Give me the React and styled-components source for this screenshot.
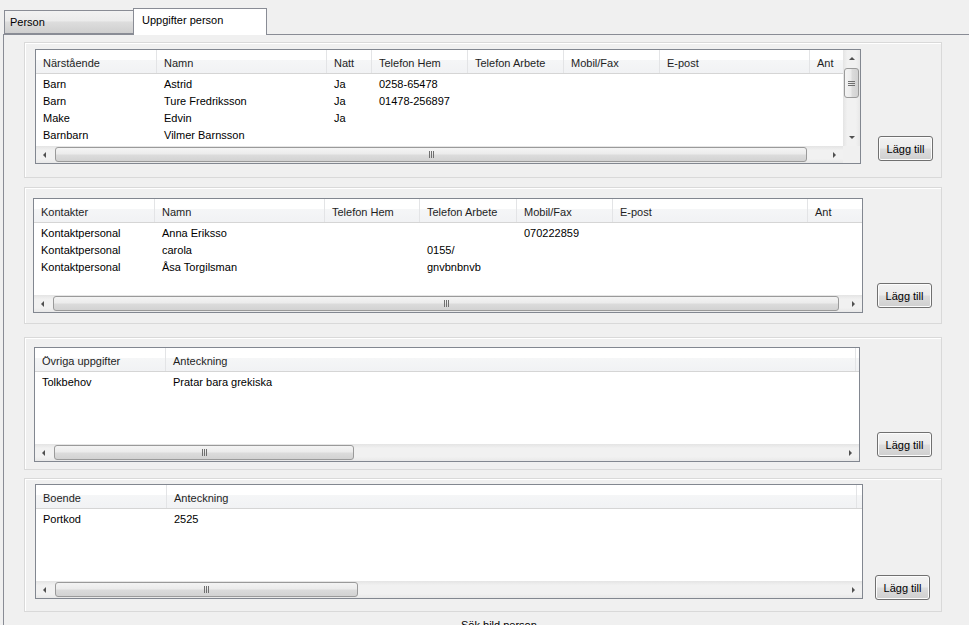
import React from "react";
import styled, { createGlobalStyle } from "styled-components";

const GlobalStyle = createGlobalStyle`
  html, body {
    margin: 0;
    padding: 0;
    background: #f0f0f0;
  }
  body {
    font-family: "Liberation Sans", Arial, sans-serif;
    font-size: 11px;
    color: #000;
  }
`;

const sections = [
  {
    key: "narstaende",
    mt: 7,
    h: 136,
    pt: 6,
    pl: 10,
    listW: 826,
    vscroll: true,
    thumb: 752,
    btnMl: 17,
    btnMt: 87,
    cols: [
      { label: "Närstående", w: 121 },
      { label: "Namn", w: 170 },
      { label: "Natt", w: 45 },
      { label: "Telefon Hem", w: 96 },
      { label: "Telefon Arbete", w: 96 },
      { label: "Mobil/Fax", w: 96 },
      { label: "E-post", w: 150 },
      { label: "Ant", w: 60 },
    ],
    rows: [
      ["Barn", "Astrid", "Ja", "0258-65478"],
      ["Barn", "Ture Fredriksson", "Ja", "01478-256897"],
      ["Make", "Edvin", "Ja"],
      ["Barnbarn", "Vilmer Barnsson"],
    ],
  },
  {
    key: "kontakter",
    mt: 9,
    h: 137,
    pt: 10,
    pl: 8,
    listW: 830,
    thumb: 786,
    btnMl: 14,
    btnMt: 85,
    cols: [
      { label: "Kontakter", w: 121 },
      { label: "Namn", w: 170 },
      { label: "Telefon Hem", w: 95 },
      { label: "Telefon Arbete", w: 97 },
      { label: "Mobil/Fax", w: 96 },
      { label: "E-post", w: 195 },
      { label: "Ant", w: 60 },
    ],
    rows: [
      ["Kontaktpersonal", "Anna Eriksso", "", "", "070222859"],
      ["Kontaktpersonal", "carola", "", "0155/"],
      ["Kontaktpersonal", "Åsa Torgilsman", "", "gnvbnbnvb"],
    ],
  },
  {
    key: "ovriga",
    mt: 13,
    h: 133,
    pt: 9,
    pl: 9,
    listW: 826,
    thumb: 300,
    btnMl: 17,
    btnMt: 85,
    cols: [
      { label: "Övriga uppgifter", w: 131 },
      { label: "Anteckning", w: 690 },
    ],
    rows: [["Tolkbehov", "Pratar bara grekiska"]],
  },
  {
    key: "boende",
    mt: 8,
    h: 134,
    pt: 5,
    pl: 10,
    listW: 828,
    thumb: 303,
    btnMl: 12,
    btnMt: 91,
    cols: [
      { label: "Boende", w: 131 },
      { label: "Anteckning", w: 690 },
    ],
    rows: [["Portkod", "2525"]],
  },
];

function Grip({ vertical }) {
  return vertical ? (
    <svg width="7" height="7" viewBox="0 0 7 7">
      <path d="M0 1.5H7M0 3.5H7M0 5.5H7" stroke="#6f6f6f" strokeWidth="1" />
    </svg>
  ) : (
    <svg width="7" height="7" viewBox="0 0 7 7">
      <path d="M1.5 0V7M3.5 0V7M5.5 0V7" stroke="#6f6f6f" strokeWidth="1" />
    </svg>
  );
}

function ListView({ section }) {
  const { cols, rows, listW, vscroll, thumb } = section;
  return (
    <ListBox $w={listW} $vscroll={vscroll}>
      <ListContent>
        <HeaderRow>
          {cols.map((c) => (
            <HeaderCell key={c.label} $w={c.w}>
              {c.label}
            </HeaderCell>
          ))}
        </HeaderRow>
        <Body>
          {rows.map((r, i) => (
            <Row key={i}>
              {cols.map((c, j) => (
                <Cell key={j} $w={c.w}>
                  {r[j] || ""}
                </Cell>
              ))}
            </Row>
          ))}
        </Body>
      </ListContent>
      {vscroll && (
        <VScroll>
          <ScrollButton>
            <Arrow $dir="up" />
          </ScrollButton>
          <VThumb>
            <Grip vertical />
          </VThumb>
          <Spacer />
          <ScrollButton>
            <Arrow $dir="down" />
          </ScrollButton>
        </VScroll>
      )}
      <HScroll $span={!vscroll}>
        <ScrollButton>
          <Arrow $dir="left" />
        </ScrollButton>
        <HThumb $len={thumb}>
          <Grip />
        </HThumb>
        <Spacer />
        <ScrollButton>
          <Arrow $dir="right" />
        </ScrollButton>
      </HScroll>
      {vscroll && <Corner />}
    </ListBox>
  );
}

function App() {
  return (
    <Window>
      <GlobalStyle />
      <TabStrip>
        <Tab $w={130}>Person</Tab>
        <Tab $w={134} $active>
          Uppgifter person
        </Tab>
      </TabStrip>
      <Page>
        {sections.map((s) => (
          <Panel key={s.key} $mt={s.mt} $h={s.h} $pt={s.pt} $pl={s.pl}>
            <ListView section={s} />
            <Button $ml={s.btnMl} $mt={s.btnMt}>
              Lägg till
            </Button>
          </Panel>
        ))}
        <Footer>Sök bild person</Footer>
      </Page>
    </Window>
  );
}

export default App;

const Window = styled.div`
  width: 969px;
  height: 625px;
  overflow: hidden;
  background: #f0f0f0;
  display: flex;
  flex-direction: column;
`;

const TabStrip = styled.div`
  height: 34px;
  flex-shrink: 0;
  display: flex;
  align-items: flex-end;
  padding-left: 4px;
`;

const Tab = styled.div`
  position: relative;
  z-index: ${(p) => (p.$active ? 2 : 1)};
  box-sizing: border-box;
  width: ${(p) => p.$w}px;
  height: ${(p) => (p.$active ? 27 : 24)}px;
  margin-left: ${(p) => (p.$active ? -1 : 0)}px;
  margin-bottom: ${(p) => (p.$active ? -1 : 0)}px;
  padding: ${(p) => (p.$active ? "5px 0 0 8px" : "5px 0 0 5px")};
  border: 1px solid #898c95;
  border-bottom: ${(p) => (p.$active ? "none" : "1px solid #898c95")};
  background: ${(p) =>
    p.$active
      ? "#ffffff"
      : "linear-gradient(#f2f2f2, #ebebeb 45%, #dddddd 50%, #cfcfcf)"};
  font-size: 11px;
  line-height: 13px;
  color: #000;
`;

const Page = styled.div`
  flex: 1;
  margin-left: 3px;
  border-left: 1px solid #898c95;
  border-top: 1px solid #898c95;
  padding-left: 20px;
  display: flex;
  flex-direction: column;
`;

const Panel = styled.section`
  box-sizing: border-box;
  flex-shrink: 0;
  width: 918px;
  height: ${(p) => p.$h}px;
  margin-top: ${(p) => p.$mt}px;
  padding: ${(p) => p.$pt}px 0 0 ${(p) => p.$pl}px;
  border: 1px solid #d9d9d9;
  box-shadow: inset 1px 1px 0 #ffffff;
  display: flex;
  align-items: flex-start;
`;

const ListBox = styled.div`
  box-sizing: border-box;
  flex-shrink: 0;
  width: ${(p) => p.$w}px;
  height: 115px;
  border: 1px solid #828790;
  background: #ffffff;
  display: grid;
  grid-template-columns: ${(p) => (p.$vscroll ? "minmax(0, 1fr) 17px" : "minmax(0, 1fr)")};
  grid-template-rows: minmax(0, 1fr) 17px;
  overflow: hidden;
`;

const ListContent = styled.div`
  grid-column: 1;
  grid-row: 1;
  overflow: hidden;
`;

const HeaderRow = styled.div`
  display: flex;
  height: 23px;
  border-bottom: 1px solid #d5d5d5;
  background: linear-gradient(#ffffff 0%, #ffffff 42%, #f5f6f7 45%, #f1f2f4 100%);
`;

const HeaderCell = styled.div`
  box-sizing: border-box;
  flex: 0 0 ${(p) => p.$w}px;
  padding: 7px 0 0 7px;
  border-right: 1px solid #e3e4e6;
  line-height: 13px;
  white-space: nowrap;
  overflow: hidden;
  color: #1e1e1e;
`;

const Body = styled.div`
  padding-top: 2px;
`;

const Row = styled.div`
  display: flex;
  height: 17px;
`;

const Cell = styled.div`
  box-sizing: border-box;
  flex: 0 0 ${(p) => p.$w}px;
  padding-left: 7px;
  line-height: 17px;
  white-space: nowrap;
  overflow: hidden;
`;

const HScroll = styled.div`
  grid-column: ${(p) => (p.$span ? "1 / -1" : "1")};
  grid-row: 2;
  display: flex;
  align-items: center;
  background: linear-gradient(#e4e4e4, #f1f1f1 25%, #f1f1f1 75%, #e8e8e8);
`;

const VScroll = styled.div`
  grid-column: 2;
  grid-row: 1;
  display: flex;
  flex-direction: column;
  align-items: center;
  background: linear-gradient(90deg, #e4e4e4, #f1f1f1 25%, #f1f1f1 75%, #e8e8e8);
`;

const Corner = styled.div`
  grid-column: 2;
  grid-row: 2;
  background: #f0f0f0;
`;

const ScrollButton = styled.div`
  flex: 0 0 17px;
  width: 17px;
  height: 17px;
  display: flex;
  align-items: center;
  justify-content: center;
`;

const Spacer = styled.div`
  flex: 1;
`;

const Arrow = styled.span`
  width: 0;
  height: 0;
  border-style: solid;
  border-color: transparent;
  ${(p) =>
    p.$dir === "left" &&
    "border-width: 3px 3px 3px 0; border-right-color: #505050;"}
  ${(p) =>
    p.$dir === "right" &&
    "border-width: 3px 0 3px 3px; border-left-color: #505050;"}
  ${(p) =>
    p.$dir === "up" &&
    "border-width: 0 3px 3px 3px; border-bottom-color: #505050;"}
  ${(p) =>
    p.$dir === "down" &&
    "border-width: 3px 3px 0 3px; border-top-color: #505050;"}
`;

const HThumb = styled.div`
  box-sizing: border-box;
  flex: 0 0 ${(p) => p.$len}px;
  height: 15px;
  margin-left: 2px;
  border: 1px solid #9a9a9a;
  border-radius: 3px;
  background: linear-gradient(#f4f4f4, #ebebeb 48%, #dcdcdc 52%, #d2d2d2);
  display: flex;
  align-items: center;
  justify-content: center;
`;

const VThumb = styled.div`
  box-sizing: border-box;
  flex: 0 0 30px;
  width: 15px;
  margin-top: 1px;
  border: 1px solid #9a9a9a;
  border-radius: 3px;
  background: linear-gradient(90deg, #f4f4f4, #ebebeb 48%, #dcdcdc 52%, #d2d2d2);
  display: flex;
  align-items: center;
  justify-content: center;
`;

const Button = styled.button`
  box-sizing: border-box;
  flex-shrink: 0;
  width: 55px;
  height: 25px;
  margin-left: ${(p) => p.$ml}px;
  margin-top: ${(p) => p.$mt}px;
  padding: 0;
  border: 1px solid #707070;
  border-radius: 3px;
  background: linear-gradient(#f2f2f2, #ebebeb 48%, #dddddd 52%, #cfcfcf);
  box-shadow: inset 0 0 0 1px #fcfcfc;
  font-family: "Liberation Sans", Arial, sans-serif;
  font-size: 11px;
  color: #000;
`;

const Footer = styled.div`
  padding: 7px 0 0 437px;
  line-height: 13px;
  white-space: nowrap;
`;
